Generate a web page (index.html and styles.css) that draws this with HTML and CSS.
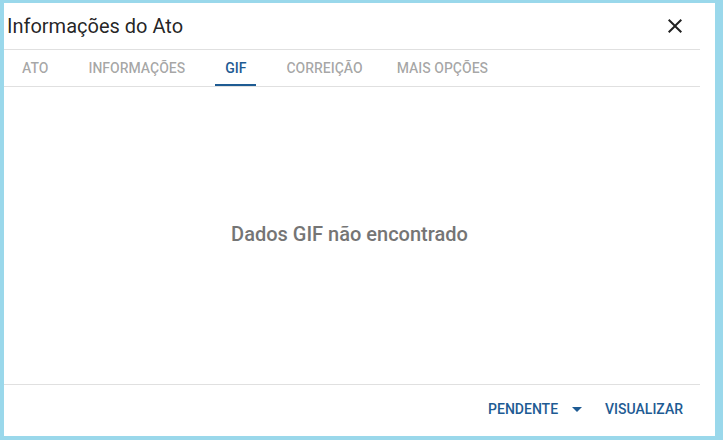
FILE: index.html
```html
<!DOCTYPE html>
<html lang="pt-BR">
<head>
  <meta charset="UTF-8">
  <title>Informações do Ato</title>
  <link rel="stylesheet" href="styles.css">
</head>
<body>
  <div class="sheet">
    <div class="dialog">
      <div class="dialog-header">
        <h1>Informações do Ato</h1>
        <button class="icon-btn" aria-label="Fechar">
          <svg viewBox="0 0 24 24" width="24" height="24"><path d="M19,6.41L17.59,5L12,10.59L6.41,5L5,6.41L10.59,12L5,17.59L6.41,19L12,13.41L17.59,19L19,17.59L13.41,12L19,6.41Z"/></svg>
        </button>
      </div>

      <div class="tabs">
        <div class="tab">Ato</div>
        <div class="tab">Informações</div>
        <div class="tab active">Gif</div>
        <div class="tab">Correição</div>
        <div class="tab">Mais opções</div>
      </div>

      <div class="dialog-body">
        <p class="empty">Dados GIF não encontrado</p>
      </div>

      <div class="dialog-actions">
        <button class="btn btn-menu">
          <span>Pendente</span>
          <svg viewBox="0 0 24 24" width="24" height="24"><path d="M7,10L12,15L17,10H7Z"/></svg>
        </button>
        <button class="btn">Visualizar</button>
      </div>
    </div>
  </div>
</body>
</html>
```

FILE: styles.css
```css
* { box-sizing: border-box; margin: 0; padding: 0 }
html, body { height: 100% }
body {
  background: #9ad8eb;
  font-family: Roboto, "Noto Sans", sans-serif;
  padding: 3px 8px 4px 4px;
}
.sheet {
  background: #fff;
  height: 100%;
  padding-right: 15px;
}
.dialog {
  height: 100%;
  display: flex;
  flex-direction: column;
}
.dialog-header {
  height: 47px;
  display: flex;
  align-items: center;
  justify-content: space-between;
  padding: 0 13px 1px 3px;
  border-bottom: 1px solid #e0e0e0;
}
.dialog-header h1 {
  font-size: 20px;
  font-weight: 400;
  color: rgba(0,0,0,0.87);
}
.icon-btn {
  border: none;
  background: none;
  width: 24px;
  height: 24px;
  cursor: pointer;
}
.icon-btn svg { fill: rgba(0,0,0,0.87); display: block }

.tabs {
  height: 37px;
  display: flex;
  border-bottom: 1px solid #e0e0e0;
}
.tab {
  position: relative;
  display: flex;
  align-items: center;
  padding: 0 20px;
  font-size: 14px;
  font-weight: 500;
  text-transform: uppercase;
  color: rgba(0,0,0,0.36);
}
.tab:first-child { padding-left: 18px }
.tab:last-child { padding-left: 14px }
.tab.active { color: #1e5b93 }
.tab.active::after {
  content: "";
  position: absolute;
  left: 10px;
  right: 10px;
  bottom: 0;
  height: 2px;
  background: #1e5b93;
}

.dialog-body {
  flex: 1;
  display: flex;
  align-items: center;
  justify-content: center;
  padding: 0 5px 3px 0;
}
.empty {
  font-size: 20px;
  font-weight: 500;
  color: #757575;
}

.dialog-actions {
  height: 52px;
  display: flex;
  align-items: center;
  justify-content: flex-end;
  gap: 8px;
  padding: 0 9px 3px 0;
  border-top: 1px solid #e0e0e0;
}
.btn {
  display: flex;
  align-items: center;
  height: 36px;
  padding: 0 8px;
  border: none;
  background: none;
  font-family: inherit;
  font-size: 14px;
  font-weight: 500;
  text-transform: uppercase;
  color: #1e5b93;
  cursor: pointer;
}
.btn-menu { padding-right: 0 }
.btn-menu svg { fill: #1e5b93; margin-left: 7px }
```
